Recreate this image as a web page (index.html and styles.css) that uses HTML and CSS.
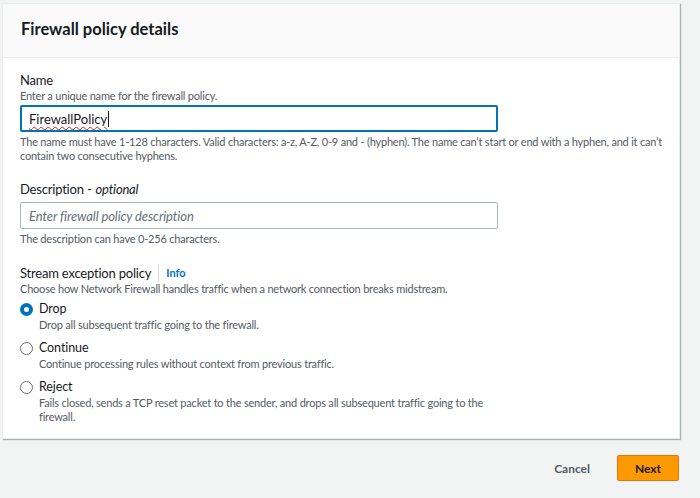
FILE: index.html
```html
<!DOCTYPE html>
<html>
<head>
<meta charset="utf-8">
<link rel="stylesheet" href="styles.css">
</head>
<body>
<div class="page">
  <section class="panel">
    <header class="panel-header"><h2>Firewall policy details</h2></header>
    <div class="panel-body">
      <div class="field">
        <div class="label">Name</div>
        <div class="desc">Enter a unique name for the firewall policy.</div>
        <div class="input focused"><span class="typed">FirewallPolicy</span><span class="caret"></span></div>
        <div class="constraint">The name must have 1-128 characters. Valid characters: a-z, A-Z, 0-9 and - (hyphen). The name can’t start or end with a hyphen, and it can’t<br>contain two consecutive hyphens.</div>
      </div>
      <div class="field">
        <div class="label">Description - <i>optional</i></div>
        <div class="input"><span class="placeholder">Enter firewall policy description</span></div>
        <div class="constraint">The description can have 0-256 characters.</div>
      </div>
      <div class="field last">
        <div class="label">Stream exception policy <span class="sep"></span><span class="info">Info</span></div>
        <div class="desc">Choose how Network Firewall handles traffic when a network connection breaks midstream.</div>
        <div class="radios">
          <div class="radio">
            <span class="dot checked"></span>
            <div class="radio-text">
              <div class="radio-label">Drop</div>
              <div class="radio-desc">Drop all subsequent traffic going to the firewall.</div>
            </div>
          </div>
          <div class="radio">
            <span class="dot"></span>
            <div class="radio-text">
              <div class="radio-label">Continue</div>
              <div class="radio-desc">Continue processing rules without context from previous traffic.</div>
            </div>
          </div>
          <div class="radio">
            <span class="dot"></span>
            <div class="radio-text">
              <div class="radio-label">Reject</div>
              <div class="radio-desc">Fails closed, sends a TCP reset packet to the sender, and drops all subsequent traffic going to the<br>firewall.</div>
            </div>
          </div>
        </div>
      </div>
    </div>
  </section>
  <div class="actions">
    <span class="cancel">Cancel</span>
    <span class="next">Next</span>
  </div>
</div>
</body>
</html>
```
FILE: styles.css
```css
* { box-sizing: border-box; }
html, body { margin: 0; padding: 0; }
body {
  background: #f2f3f3;
  font-family: Lato, "Open Sans", sans-serif;
  color: #16191f;
  width: 700px;
  height: 498px;
  overflow: hidden;
}
.page { padding: 3px 0 0 2px; }
.panel {
  width: 678px;
  background: #fff;
  border: 1px solid #eaeded;
  box-shadow: 1px 1px 1px 0 rgba(0,28,36,0.3);
}
.panel-header {
  background: #fafafa;
  border-bottom: 1px solid #eaeded;
  height: 54px;
  padding: 0 18px 4px 18px;
  display: flex;
  align-items: center;
}
.panel-header h2 {
  margin: 0;
  font-size: 16.5px;
  font-weight: 700;
}
.panel-body { padding: 13px 17px 14px 17px; }
.field { margin-bottom: 17px; }
.field.last { margin-bottom: 0; margin-top: 18px; }
.label { font-size: 13px; letter-spacing: -0.2px; line-height: 18px; display: flex; align-items: center; }
.label i { margin-left: 4px; }
.desc, .constraint, .radio-desc {
  font-size: 11px;
  letter-spacing: -0.2px;
  line-height: 14px;
  color: #545b64;
}
.input {
  margin-top: 2px;
  width: 478px;
  height: 27px;
  border: 1px solid #aab7b8;
  border-radius: 2px;
  padding: 0 8px;
  display: flex;
  align-items: center;
  font-size: 13px;
}
.label + .input { margin-top: 4px; }
.input.focused { border: 2px solid #0073bb; padding: 0 7px; }
.typed {
  text-decoration: underline wavy #e02020;
  text-decoration-thickness: 1px;
  text-underline-offset: 2px;
}
.caret { display: inline-block; width: 1px; height: 16px; background: #16191f; margin-left: 1px; }
.placeholder { font-style: italic; color: #687078; letter-spacing: -0.1px; }
.constraint { margin-top: 3px; }
.sep { display: inline-block; width: 1px; height: 18px; background: #d5dbdb; margin: 0 7px 0 7px; }
.info { font-size: 11px; font-weight: 700; color: #0073bb; letter-spacing: 0; }
.radios { margin-top: 4px; }
.radio { display: flex; align-items: flex-start; margin-bottom: 7px; }
.radio:last-child { margin-bottom: 0; }
.dot {
  width: 13px;
  height: 13px;
  border: 1px solid #687078;
  border-radius: 50%;
  margin: 3px 6px 0 0;
  flex: none;
}
.dot.checked { border: 4px solid #0073bb; }
.radio-label { font-size: 12.5px; letter-spacing: -0.1px; line-height: 18px; }
.actions {
  display: flex;
  justify-content: flex-end;
  align-items: center;
  padding: 16px 21px 0 0;
  gap: 27px;
}
.cancel { font-size: 12px; font-weight: 700; color: #545b64; }
.next {
  background: #ff9900;
  border: 1px solid #ec7211;
  border-radius: 2px;
  width: 62px;
  height: 26px;
  display: flex;
  align-items: center;
  justify-content: center;
  font-size: 12px;
  font-weight: 700;
  color: #16191f;
}
```
